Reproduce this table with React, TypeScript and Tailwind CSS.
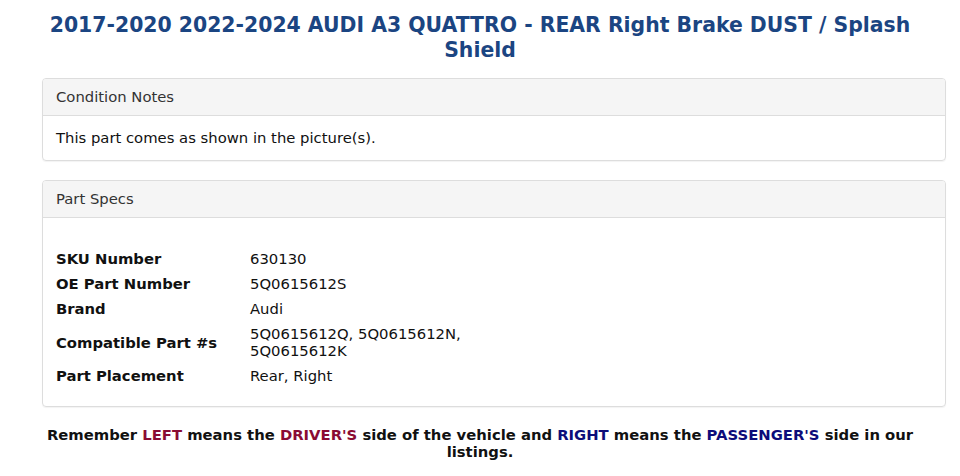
import React from "react";

const rows: [string, React.ReactNode][] = [
  ["SKU Number", "630130"],
  ["OE Part Number", "5Q0615612S"],
  ["Brand", "Audi"],
  [
    "Compatible Part #s",
    <>
      5Q0615612Q, 5Q0615612N,
      <br />
      5Q0615612K
    </>,
  ],
  ["Part Placement", "Rear, Right"],
];

export default function App() {
  return (
    <div
      className="w-[960px] h-[476px] bg-white text-[#000] overflow-hidden"
      style={{ fontFamily: '"DejaVu Sans", sans-serif' }}
    >
      <h1 className="pt-[13px] px-[40px] text-center text-[20.4px] leading-[25px] font-bold text-[#1b4582]">
        2017-2020 2022-2024 AUDI A3 QUATTRO - REAR Right Brake DUST / Splash Shield
      </h1>

      <div className="ml-[42px] w-[904px] mt-[15px] border border-[#dddddd] rounded-[4px] shadow-[0_1px_1px_rgba(0,0,0,0.05)]">
        <div className="h-[37px] px-[13px] flex items-center bg-[#f5f5f5] border-b border-[#dddddd] rounded-t-[3px] text-[14.8px] text-[#333]">
          Condition Notes
        </div>
        <div className="h-[44px] px-[13px] flex items-center text-[14.8px] text-[#111]">
          This part comes as shown in the picture(s).
        </div>
      </div>

      <div className="ml-[42px] w-[904px] mt-[19px] border border-[#dddddd] rounded-[4px] shadow-[0_1px_1px_rgba(0,0,0,0.05)]">
        <div className="h-[37px] px-[13px] flex items-center bg-[#f5f5f5] border-b border-[#dddddd] rounded-t-[3px] text-[14.8px] text-[#333]">
          Part Specs
        </div>
        <div className="px-[13px] pt-[28px] pb-[18px] text-[14.8px] leading-[17px] text-[#111]">
          {rows.map(([k, v]) => (
            <div key={k} className="flex items-center py-[4px]">
              <div className="w-[194px] font-bold">{k}</div>
              <div>{v}</div>
            </div>
          ))}
        </div>
      </div>

      <p className="mt-[19px] px-[40px] text-center text-[14.8px] leading-[17px] font-bold text-[#111]">
        Remember <span className="text-[#8a0b33]">LEFT</span> means the{" "}
        <span className="text-[#8a0b33]">DRIVER'S</span> side of the vehicle and{" "}
        <span className="text-[#0c0c7a]">RIGHT</span> means the{" "}
        <span className="text-[#0c0c7a]">PASSENGER'S</span> side in our listings.
      </p>
    </div>
  );
}
